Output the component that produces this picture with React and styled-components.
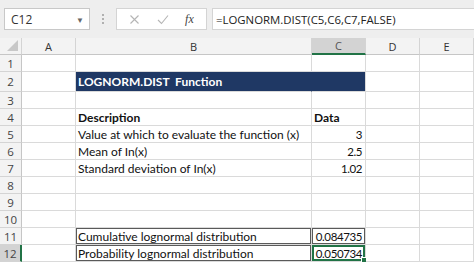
import React from 'react';
import styled, { createGlobalStyle } from 'styled-components';

const GlobalStyle = createGlobalStyle`
  html, body {
    margin: 0;
    padding: 0;
    background: #ffffff;
    overflow: hidden;
  }
`;

const Page = styled.div`
  width: 474px;
  height: 262px;
  overflow: hidden;
  background: #ffffff;
  font-family: 'Lato', 'Liberation Sans', sans-serif;
`;

// formula bar across the top
const Toolbar = styled.div`
  display: flex;
  align-items: center;
  height: 38px;
  padding: 0 0 0 4px;
  box-sizing: border-box;
  background: #eeeeee;
`;

const NameBox = styled.div`
  display: flex;
  align-items: center;
  justify-content: space-between;
  width: 86px;
  height: 22px;
  box-sizing: border-box;
  padding: 0 5px 0 6px;
  background: #fff;
  border: 1px solid #c8c8c8;
  font-family: 'Open Sans', 'Noto Sans', sans-serif;
  font-size: 12px;
  color: #333;
`;

const Caret = styled.span`
  font-size: 8px;
  color: #666;
`;

const Dots = styled.div`
  display: flex;
  flex-direction: column;
  gap: 2px;
  margin: 0 12px 0 12px;

  span {
    width: 2px;
    height: 2px;
    background: #b0b0b0;
  }
`;

const ButtonBox = styled.div`
  display: flex;
  align-items: center;
  justify-content: space-around;
  width: 91px;
  height: 22px;
  box-sizing: border-box;
  padding: 0 4px;
  background: #fff;
  border: 1px solid #d4d4d4;
`;

const Fx = styled.span`
  font-family: 'Liberation Serif', serif;
  font-style: italic;
  font-size: 12px;
  color: #444;
`;

const FormulaInput = styled.div`
  flex: 1;
  display: flex;
  align-items: center;
  height: 22px;
  margin-left: 5px;
  box-sizing: border-box;
  padding-left: 3px;
  background: #fff;
  border: 1px solid #d4d4d4;
  border-right: none;
  font-family: 'Open Sans', 'Noto Sans', sans-serif;
  font-size: 11.4px;
  color: #222;
  white-space: nowrap;
`;

// the sheet grid
const Sheet = styled.div`
  display: grid;
  grid-template-columns: 22px 54px 236px 54px 54px 1fr;
  grid-template-rows: 17px 17px 20px repeat(10, 17px);
`;

const ColHead = styled.div`
  display: flex;
  align-items: center;
  justify-content: center;
  box-sizing: border-box;
  background: ${p => (p.$active ? '#d3d3d3' : '#f3f3f3')};
  border-right: 1px solid #d4d4d4;
  border-bottom: ${p => (p.$active ? '2px solid #217346' : '1px solid #c6c6c6')};
  font-family: 'Open Sans', 'Noto Sans', sans-serif;
  font-size: 11px;
  color: ${p => (p.$active ? '#555' : '#333')};
`;

const Corner = styled(ColHead)`
  position: relative;
  &::after {
    content: '';
    position: absolute;
    right: 3px;
    bottom: 3px;
    border-left: 11px solid transparent;
    border-bottom: 11px solid #c8c8c8;
  }
`;

const RowHead = styled.div`
  display: flex;
  align-items: center;
  justify-content: center;
  box-sizing: border-box;
  background: ${p => (p.$active ? '#d3d3d3' : '#f3f3f3')};
  border-right: ${p => (p.$active ? '2px solid #217346' : '1px solid #c6c6c6')};
  border-bottom: 1px solid #d4d4d4;
  font-family: 'Open Sans', 'Noto Sans', sans-serif;
  font-size: 11.5px;
  color: #444;
`;

const Cell = styled.div`
  position: relative;
  display: flex;
  align-items: center;
  justify-content: ${p => (p.$right ? 'flex-end' : 'flex-start')};
  box-sizing: border-box;
  padding: 0 3px 0 2px;
  background: ${p => (p.$band ? '#1f3864' : '#fff')};
  border-right: 1px solid ${p => (p.$band && !p.$last ? '#1f3864' : '#dadada')};
  border-bottom: 1px solid #dadada;
  box-shadow: ${p =>
    p.$selected
      ? 'inset 0 0 0 2px #217346'
      : p.$boxed
      ? 'inset 0 0 0 1px #5a5a5a'
      : 'none'};
  font-size: ${p => (p.$right ? '11.5px' : '12px')};
  letter-spacing: ${p => (p.$right ? '-0.4px' : 'normal')};
  font-weight: ${p => (p.$bold ? 700 : 400)};
  color: ${p => (p.$band ? '#fff' : '#111')};
  white-space: nowrap;
  overflow: visible;
`;

const FillHandle = styled.span`
  position: absolute;
  right: -3px;
  bottom: -3px;
  width: 5px;
  height: 5px;
  background: #217346;
  border: 1px solid #fff;
`;

const columns = ['A', 'B', 'C', 'D', 'E'];

const rows = [
  { n: 1 },
  { n: 2, band: true, b: 'LOGNORM.DIST\u00a0 Function' },
  { n: 3 },
  { n: 4, b: 'Description', c: 'Data', bold: true },
  { n: 5, b: 'Value at which to evaluate the function (x)', c: '3' },
  { n: 6, b: 'Mean of In(x)', c: '2.5' },
  { n: 7, b: 'Standard deviation of In(x)', c: '1.02' },
  { n: 8 },
  { n: 9 },
  { n: 10 },
  { n: 11, b: 'Cumulative lognormal distribution', c: '0.084735', boxed: true },
  { n: 12, b: 'Probability lognormal distribution', c: '0.050734', boxed: true, selected: true },
];

const Cross = () => (
  <svg width="11" height="11" viewBox="0 0 11 11">
    <path d="M1.5 1.5 L9.5 9.5 M9.5 1.5 L1.5 9.5" stroke="#b5b5b5" strokeWidth="1.1" fill="none" />
  </svg>
);

const Check = () => (
  <svg width="12" height="11" viewBox="0 0 12 11">
    <path d="M1 6 L4.5 9.5 L11 1.5" stroke="#b5b5b5" strokeWidth="1.1" fill="none" />
  </svg>
);

const App = () => {
  return (
    <Page>
      <GlobalStyle />
      <Toolbar>
        <NameBox>
          C12
          <Caret>▼</Caret>
        </NameBox>
        <Dots>
          <span />
          <span />
          <span />
        </Dots>
        <ButtonBox>
          <Cross />
          <Check />
          <Fx>fx</Fx>
        </ButtonBox>
        <FormulaInput>=LOGNORM.DIST(C5,C6,C7,FALSE)</FormulaInput>
      </Toolbar>

      <Sheet>
        <Corner />
        {columns.map(c => (
          <ColHead key={c} $active={c === 'C'}>{c}</ColHead>
        ))}

        {rows.map(r => (
          <React.Fragment key={r.n}>
            <RowHead $active={r.selected}>{r.n}</RowHead>
            <Cell />
            <Cell $band={r.band} $bold={r.band || r.bold} $boxed={r.boxed}>
              {r.b}
            </Cell>
            <Cell
              $band={r.band}
              $last
              $bold={r.bold}
              $right={!r.bold && !r.band}
              $boxed={r.boxed}
              $selected={r.selected}
            >
              {r.c}
              {r.selected && <FillHandle />}
            </Cell>
            <Cell />
            <Cell />
          </React.Fragment>
        ))}
      </Sheet>
    </Page>
  );
};

export default App;
